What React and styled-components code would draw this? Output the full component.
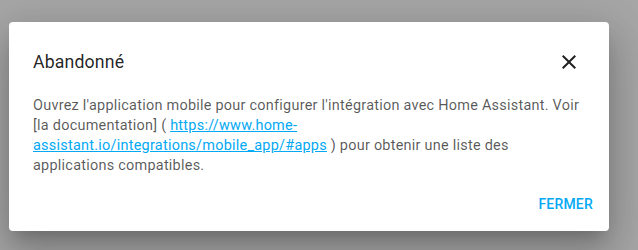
import React from "react";
import styled, { createGlobalStyle } from "styled-components";

const Global = createGlobalStyle`
  html, body { margin: 0; padding: 0; }
  body {
    background: #a6a6a6;
    font-family: Roboto, "Noto Sans", sans-serif;
    -webkit-font-smoothing: antialiased;
  }
`;

const Scrim = styled.div`
  width: 638px;
  height: 250px;
  box-sizing: border-box;
  padding: 22px 0 0 9px;
  overflow: hidden;
`;

const Dialog = styled.div`
  width: 600px;
  background: #ffffff;
  border-radius: 4px;
  box-shadow: 0 11px 15px -7px rgba(0, 0, 0, 0.2),
    0 24px 38px 3px rgba(0, 0, 0, 0.14), 0 9px 46px 8px rgba(0, 0, 0, 0.12);
  display: flex;
  flex-direction: column;
`;

const Header = styled.div`
  display: flex;
  align-items: center;
  justify-content: space-between;
  height: 48px;
  padding: 16px 16px 0 24px;
`;

const Title = styled.h2`
  margin: 0;
  font-size: 17.7px;
  line-height: 24px;
  font-weight: 400;
  color: rgba(0, 0, 0, 0.87);
  letter-spacing: 0.15px;
`;

const IconButton = styled.button`
  width: 48px;
  height: 48px;
  border: none;
  background: transparent;
  padding: 0;
  display: flex;
  align-items: center;
  justify-content: center;
  color: rgba(0, 0, 0, 0.87);
  cursor: pointer;
`;

const Content = styled.div`
  padding: 10px 24px 10px 24px;
  font-size: 14.45px;
  line-height: 20px;
  letter-spacing: 0.25px;
  color: rgba(0, 0, 0, 0.66);
`;

const Link = styled.a`
  color: #03a9f4;
  text-decoration: underline;
`;

const Actions = styled.div`
  display: flex;
  justify-content: flex-end;
  padding: 0 8px 9px 8px;
`;

const TextButton = styled.button`
  height: 36px;
  border: none;
  background: transparent;
  padding: 0 8px;
  font-family: Roboto, "Noto Sans", sans-serif;
  font-size: 14px;
  font-weight: 500;
  letter-spacing: 0.2px;
  text-transform: uppercase;
  color: #03a9f4;
  cursor: pointer;
`;

export default function App() {
  return (
    <>
      <Global />
      <Scrim>
        <Dialog>
          <Header>
            <Title>Abandonné</Title>
            <IconButton aria-label="close">
              <svg width="24" height="24" viewBox="0 0 24 24">
                <path
                  fill="currentColor"
                  d="M19,6.41L17.59,5L12,10.59L6.41,5L5,6.41L10.59,12L5,17.59L6.41,19L12,13.41L17.59,19L19,17.59L13.41,12L19,6.41Z"
                />
              </svg>
            </IconButton>
          </Header>
          <Content>
            Ouvrez l'application mobile pour configurer l'intégration avec Home
            Assistant. Voir [la documentation] ({" "}
            <Link href="#">
              https://www.home-assistant.io/integrations/mobile_app/#apps
            </Link>{" "}
            ) pour obtenir une liste des applications compatibles.
          </Content>
          <Actions>
            <TextButton>Fermer</TextButton>
          </Actions>
        </Dialog>
      </Scrim>
    </>
  );
}
